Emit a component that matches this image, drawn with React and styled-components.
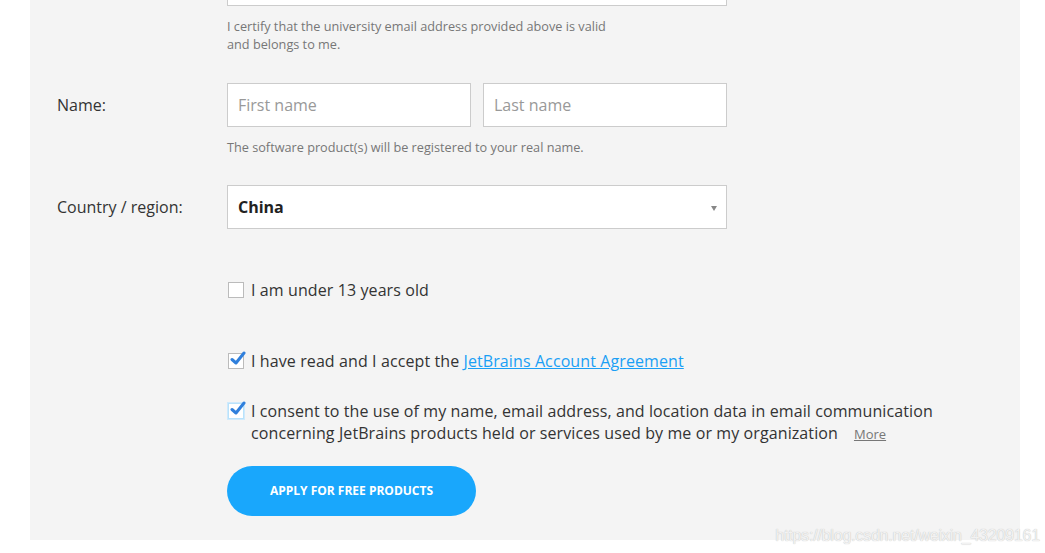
import styled, { createGlobalStyle } from 'styled-components'

const Global = createGlobalStyle`
	body {
		margin: 0;
		background: #fff;
		font-family: 'Open Sans', 'Liberation Sans', sans-serif;
		color: #333;
	}
`

const Page = styled.div`
	position: relative;
	width: 1045px;
	height: 553px;
	overflow: hidden;
`

const Panel = styled.div`
	margin-left: 30px;
	width: 990px;
	height: 540px;
	background: #f4f4f4;
	overflow: hidden;
	padding-left: 27px;
	box-sizing: border-box;
`

const Row = styled.div`
	display: flex;
	align-items: flex-start;
	margin-top: ${(p) => p.gap || 0}px;
`

const Label = styled.div`
	width: 170px;
	flex-shrink: 0;
	font-size: 16px;
	line-height: 44px;
	color: #333;
`

const Field = styled.div`
	display: flex;
	flex-direction: column;
	width: 500px;
`

const Inputs = styled.div`
	display: flex;
	gap: 12px;
`

const Input = styled.input`
	box-sizing: border-box;
	height: 44px;
	width: ${(p) => p.w || '100%'};
	border: 1px solid #ccc;
	background: #fff;
	padding: 0 10px;
	font-family: inherit;
	font-size: 16px;
	color: #333;
	outline: none;
	margin: 0;

	&::placeholder {
		color: #999;
	}
`

const Hint = styled.div`
	margin-top: 11px;
	font-size: 12.7px;
	line-height: 18px;
	color: #777;
	max-width: ${(p) => p.max || 'none'};
`

const Select = styled.div`
	box-sizing: border-box;
	height: 44px;
	border: 1px solid #ccc;
	background: #fff;
	padding: 0 10px;
	display: flex;
	align-items: center;
	justify-content: space-between;
	font-size: 16px;
	font-weight: 700;
	color: #222;
`

const Arrow = styled.span`
	width: 0;
	height: 0;
	border-left: 3.5px solid transparent;
	border-right: 3.5px solid transparent;
	border-top: 5px solid #888;
	margin-right: -1px;
	margin-top: 2px;
`

const Check = styled.label`
	display: flex;
	align-items: flex-start;
	margin-left: 170px;
	margin-top: ${(p) => p.gap}px;
	font-size: 16px;
	line-height: 22px;
	letter-spacing: 0.1px;
	color: #333;
	width: 710px;
`

const Box = styled.span`
	position: relative;
	flex-shrink: 0;
	width: 16px;
	height: 16px;
	box-sizing: border-box;
	border: 1px solid ${(p) => (p.focus ? '#b9e2fb' : '#bbb')};
	box-shadow: ${(p) => (p.focus ? '0 0 0 1px #cfeafc' : 'none')};
	background: #fff;
	margin: 3px 7px 0 1px;

	svg {
		position: absolute;
		left: 1px;
		top: -3px;
	}
`

const Link = styled.a`
	color: #1a9ff5;
	text-decoration: underline;
`

const More = styled.a`
	font-size: 13px;
	letter-spacing: 0;
	color: #777;
	text-decoration: underline;
	margin-left: 16px;
`

const Button = styled.button`
	margin: 21px 0 0 170px;
	width: 249px;
	height: 50px;
	border: none;
	border-radius: 25px;
	background: #19a7fc;
	color: #fff;
	font-family: inherit;
	font-size: 12px;
	font-weight: 700;
	padding: 0 0 2px;
	text-transform: uppercase;
	cursor: pointer;
`

const Watermark = styled.div`
	position: absolute;
	right: 5px;
	bottom: 8px;
	font-family: 'Liberation Sans', Arial, sans-serif;
	font-size: 16px;
	color: #f2f2f2;
	text-shadow: 0 0 1px #b5b5b5;
	letter-spacing: -0.2px;
`

const Tick = () => (
	<svg width="16" height="15" viewBox="0 0 16 15">
		<path d="M2 8.5 L6 12 L14 2" fill="none" stroke="#2f7fdc" strokeWidth="3" strokeLinecap="round" strokeLinejoin="round" />
	</svg>
)

export default function App() {
	return (
		<Page>
			<Global />
			<Panel>
				<Row style={{ marginTop: -38 }}>
					<Label />
					<Field>
						<Input />
						<Hint max="390px">I certify that the university email address provided above is valid and belongs to me.</Hint>
					</Field>
				</Row>
				<Row gap={30}>
					<Label>Name:</Label>
					<Field>
						<Inputs>
							<Input w="244px" placeholder="First name" />
							<Input w="244px" placeholder="Last name" />
						</Inputs>
						<Hint>The software product(s) will be registered to your real name.</Hint>
					</Field>
				</Row>
				<Row gap={29}>
					<Label>Country / region:</Label>
					<Field>
						<Select>
							China
							<Arrow />
						</Select>
					</Field>
				</Row>
				<Check gap={50}>
					<Box />
					<span>I am under 13 years old</span>
				</Check>
				<Check gap={49}>
					<Box>
						<Tick />
					</Box>
					<span>
						I have read and I accept the <Link href="#">JetBrains Account Agreement</Link>
					</span>
				</Check>
				<Check gap={28}>
					<Box focus>
						<Tick />
					</Box>
					<span>
						I consent to the use of my name, email address, and location data in email communication concerning JetBrains products held or services used by me or my organization
						<More href="#">More</More>
					</span>
				</Check>
				<Button>Apply for free products</Button>
			</Panel>
			<Watermark>https://blog.csdn.net/weixin_43209161</Watermark>
		</Page>
	)
}
